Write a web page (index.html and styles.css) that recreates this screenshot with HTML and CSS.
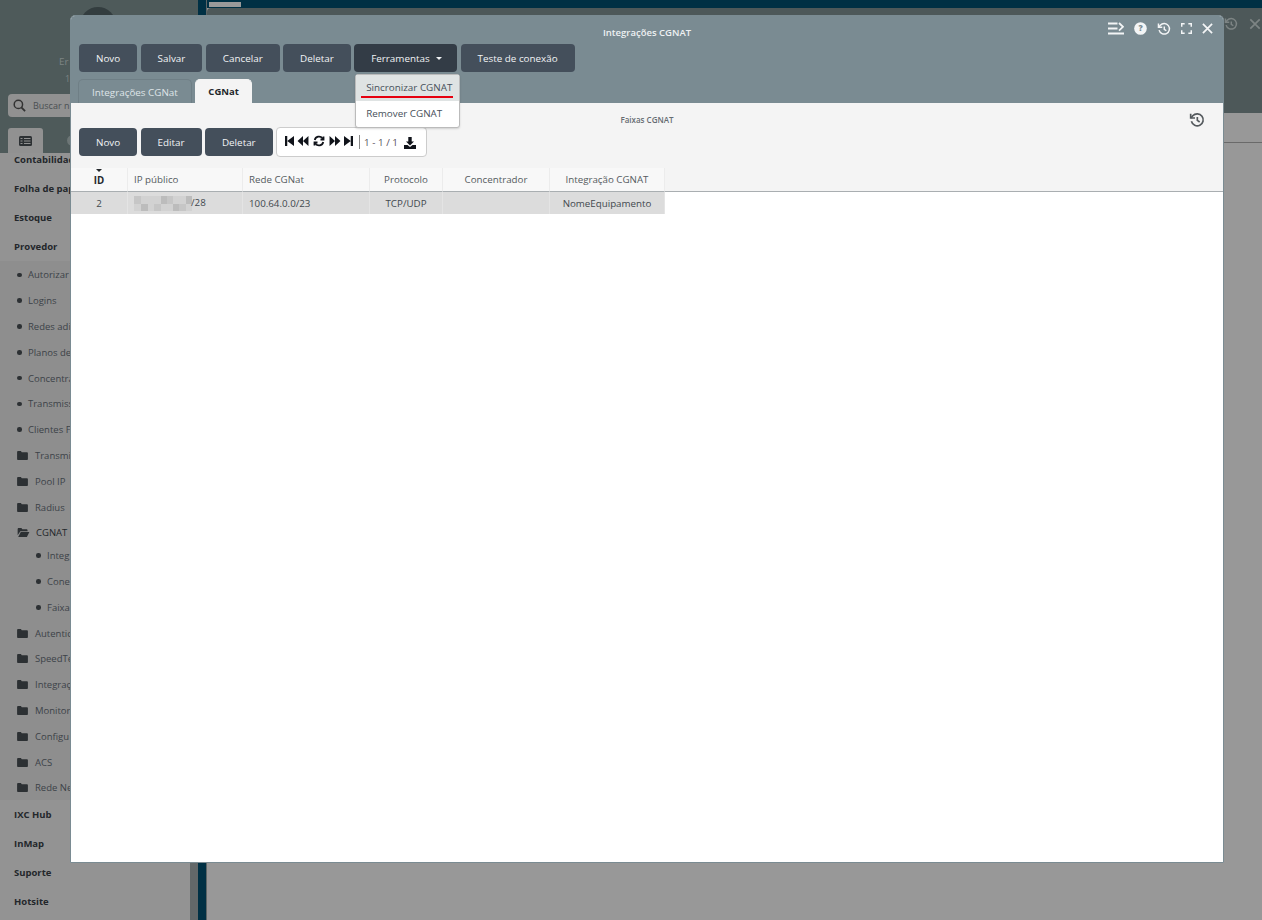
FILE: index.html
```html
<!DOCTYPE html>
<html>
<head>
  <meta charset="utf-8">
  <title>Integrações CGNAT</title>
  <link rel="stylesheet" href="styles.css">
</head>
<body>

  <svg class="defs" width="0" height="0">
    <symbol id="folder" viewBox="0 0 12 10"><path d="M0 1.2C0 .5.5 0 1.2 0h3l1 1.4h5.6c.7 0 1.2.5 1.2 1.2v6.2c0 .7-.5 1.2-1.2 1.2H1.2C.5 10 0 9.500 0 8.800z"/></symbol>
    <symbol id="folder-open" viewBox="0 0 13 10"><path d="M0 1.200C0 .5.500 0 1.200 0h3l1 1.400h4.600c.7 0 1.200.5 1.200 1.200V3.500H3L0 8z"/><path d="M3.500 4.500H13l-2.700 5.500H.6z"/></symbol>
    <symbol id="history" viewBox="0 0 24 24"><g fill="none" stroke="currentColor" stroke-width="2.500"><path d="M2.500 2.500v6.500H9"/><path d="M3.600 14a9 9 0 1 0 2-8.300L3 9"/><path d="M12.500 7.500v5l3.500 2.500"/></g></symbol>
    <symbol id="first" viewBox="0 0 10 11"><path d="M0 0h2.500v11H0zM10 0v11L2.500 5.500z"/></symbol>
    <symbol id="prev" viewBox="0 0 12 11"><path d="M6 0v11L0 5.500zM12 0v11L6 5.500z"/></symbol>
    <symbol id="next" viewBox="0 0 12 11"><path d="M0 0v11l6-5.500zM6 0v11l6-5.500z"/></symbol>
    <symbol id="last" viewBox="0 0 10 11"><path d="M10 0H7.500v11H10zM0 0v11l7.500-5.500z"/></symbol>
  </svg>

  <div class="app">
    <aside class="side">
      <div class="side-top">
        <div class="avatar"></div>
        <div class="user-name">Er</div>
        <div class="user-ip">1</div>
        <div class="search">
          <svg class="search-icon" viewBox="0 0 14 14"><circle cx="5.800" cy="5.800" r="4.500" fill="none" stroke="currentColor" stroke-width="1.600"/><path d="M9 9l4 4" stroke="currentColor" stroke-width="2"/></svg>
          <span>Buscar n</span>
        </div>
        <div class="side-tabs">
          <div class="side-tab">
            <svg class="list-icon" viewBox="0 0 13 10"><rect width="13" height="10" rx="1.500"/><path d="M1.500 2.500h2M1.500 5h2M1.500 7.500h2M5 2.500h6.500M5 5h6.500M5 7.500h6.500" stroke="#919191" stroke-width="1"/></svg>
          </div>
          <div class="side-tab-dim"></div>
        </div>
      </div>
      <div class="side-body">
        <nav class="menu">
          <div class="sec">Contabilidad</div>
          <div class="sec">Folha de pap</div>
          <div class="sec">Estoque</div>
          <div class="sec">Provedor</div>
          <div class="sub">
            <div class="row"><i class="dot"></i>Autorizar</div>
            <div class="row"><i class="dot"></i>Logins</div>
            <div class="row"><i class="dot"></i>Redes adi</div>
            <div class="row"><i class="dot"></i>Planos de</div>
            <div class="row"><i class="dot"></i>Concentra</div>
            <div class="row"><i class="dot"></i>Transmiss</div>
            <div class="row"><i class="dot"></i>Clientes F</div>
            <div class="row"><svg class="fold"><use href="#folder"/></svg>Transmi</div>
            <div class="row"><svg class="fold"><use href="#folder"/></svg>Pool IP</div>
            <div class="row"><svg class="fold"><use href="#folder"/></svg>Radius</div>
            <div class="row open"><svg class="fold"><use href="#folder-open"/></svg>CGNAT</div>
            <div class="row leaf first-leaf"><i class="dot"></i>Integ</div>
            <div class="row leaf"><i class="dot"></i>Cone</div>
            <div class="row leaf"><i class="dot"></i>Faixa</div>
            <div class="row"><svg class="fold"><use href="#folder"/></svg>Autentic</div>
            <div class="row"><svg class="fold"><use href="#folder"/></svg>SpeedTe</div>
            <div class="row"><svg class="fold"><use href="#folder"/></svg>Integraç</div>
            <div class="row"><svg class="fold"><use href="#folder"/></svg>Monitor</div>
            <div class="row"><svg class="fold"><use href="#folder"/></svg>Configu</div>
            <div class="row"><svg class="fold"><use href="#folder"/></svg>ACS</div>
            <div class="row"><svg class="fold"><use href="#folder"/></svg>Rede Ne</div>
          </div>
          <div class="sec">IXC Hub</div>
          <div class="sec">InMap</div>
          <div class="sec">Suporte</div>
          <div class="sec">Hotsite</div>
        </nav>
        <div class="scroll"></div>
      </div>
    </aside>
    <div class="rail"></div>
    <main class="main">
      <div class="main-top"><div class="main-tab"></div></div>
      <div class="panel-head">
        <svg class="bg-icon"><use href="#history"/></svg>
        <svg class="bg-icon bg-x" viewBox="0 0 14 14"><path d="M1.500 1.500l11 11M12.500 1.500l-11 11" stroke="currentColor" stroke-width="2"/></svg>
      </div>
      <div class="panel-line"></div>
    </main>
  </div>

  <div class="modal">
    <div class="modal-head">
      <div class="title-row">
        <span></span>
        <div class="modal-title">Integrações CGNAT</div>
        <div class="win-icons">
          <svg class="w-list" viewBox="0 0 16 13"><path d="M0 1.500h9.500M0 6.500h9.500M0 11.500h16" stroke="currentColor" stroke-width="2"/><path d="M11 1l4 3.800-4 3.800" fill="none" stroke="currentColor" stroke-width="1.800"/></svg>
          <svg class="w-help" viewBox="0 0 14 14"><circle cx="7" cy="7" r="6.800" fill="currentColor"/><text x="7" y="10.200" class="help-mark">?</text></svg>
          <svg class="w-hist"><use href="#history"/></svg>
          <svg class="w-full" viewBox="0 0 12 12"><path d="M.8 4V.8H4M8 .8h3.200V4M11.200 8v3.200H8M4 11.200H.8V8" fill="none" stroke="currentColor" stroke-width="1.600"/></svg>
          <svg class="w-close" viewBox="0 0 12 12"><path d="M1 1l10 10M11 1L1 11" stroke="currentColor" stroke-width="1.900"/></svg>
        </div>
      </div>
      <div class="toolbar">
        <button class="btn">Novo</button>
        <button class="btn">Salvar</button>
        <button class="btn">Cancelar</button>
        <button class="btn">Deletar</button>
        <div class="drop-wrap">
          <button class="btn btn-active">Ferramentas <i class="caret"></i></button>
          <div class="drop">
            <div class="drop-item hover">Sincronizar CGNAT<i class="red-mark"></i></div>
            <div class="drop-item">Remover CGNAT</div>
          </div>
        </div>
        <button class="btn">Teste de conexão</button>
      </div>
      <div class="tabs">
        <div class="tab">Integrações CGNat</div>
        <div class="tab tab-on">CGNat</div>
      </div>
    </div>

    <div class="modal-body">
      <div class="sub-title">
        <span></span>
        <div class="sub-name">Faixas CGNAT</div>
        <svg class="sub-hist"><use href="#history"/></svg>
      </div>
      <div class="toolbar toolbar-sub">
        <button class="btn">Novo</button>
        <button class="btn">Editar</button>
        <button class="btn">Deletar</button>
        <div class="pager">
          <svg class="pg pg-first"><use href="#first"/></svg>
          <svg class="pg pg-prev"><use href="#prev"/></svg>
          <svg class="pg pg-sync" viewBox="0 0 24 24"><g fill="none" stroke="currentColor" stroke-width="3.600"><path d="M21 3v6h-6"/><path d="M3.500 10A8.800 8.800 0 0 1 19 6.500L21 9"/><path d="M3 21v-6h6"/><path d="M20.500 14A8.800 8.800 0 0 1 5 17.500L3 15"/></g></svg>
          <svg class="pg pg-next"><use href="#next"/></svg>
          <svg class="pg pg-last"><use href="#last"/></svg>
          <span class="pg-sep"></span>
          <span class="pg-text">1 - 1 / 1</span>
          <svg class="pg pg-down" viewBox="0 0 12 12"><path d="M4.300 0h3.400v4.500H10L6 8.500 2 4.500h2.300z"/><path d="M0 8h3.500L6 10l2.500-2H12v4H0z"/></svg>
        </div>
      </div>

      <table class="grid">
        <thead>
          <tr>
            <th class="c-id"><i class="sort"></i><b>ID</b></th>
            <th class="c-ip left">IP público</th>
            <th class="c-net left">Rede CGNat</th>
            <th class="c-pro">Protocolo</th>
            <th class="c-con">Concentrador</th>
            <th class="c-int">Integração CGNAT</th>
            <th class="c-fill"></th>
          </tr>
        </thead>
        <tbody>
          <tr>
            <td>2</td>
            <td class="left"><svg class="blur" viewBox="0 0 58 15"><rect width="58" height="15" fill="#d2d2d2"/><path d="M0 0h7v8H0zM20 8h7v7h-7zM33 0h6v8h-6zM45 8h7v7h-7z" fill="#c6c6c6"/><path d="M7 8h7v7H7zM27 0h6v8h-6zM39 8h6v7h-6zM52 0h6v8h-6z" fill="#bcbcbc"/></svg><span class="mask">/28</span></td>
            <td class="left">100.64.0.0/23</td>
            <td>TCP/UDP</td>
            <td></td>
            <td>NomeEquipamento</td>
            <td class="c-fill"></td>
          </tr>
        </tbody>
      </table>
    </div>
  </div>

</body>
</html>
```

FILE: styles.css
```css
* {
  box-sizing: border-box;
}

html, body {
  margin: 0;
  height: 100%;
  overflow: hidden;
}

body {
  font-family: "Open Sans", sans-serif;
  font-size: 9.85px;
  color: #444;
  background: #989898;
}

.defs {
  position: absolute;
}

.app {
  display: flex;
  height: 920px;
}

/* background page, dimmed behind the modal */
.side {
  width: 198px;
  display: flex;
  flex-direction: column;
}

.side-top {
  height: 153px;
  background: #4e5a5a;
  padding-top: 7px;
  display: flex;
  flex-direction: column;
}

.avatar {
  width: 36px;
  height: 36px;
  border-radius: 50%;
  background: #333d3f;
  margin: 0 0 0 80px;
}

.user-name {
  margin-top: 11px;
  padding-left: 59px;
  white-space: nowrap;
  color: #7d8484;
  line-height: 14px;
  height: 14px;
}

.user-ip {
  margin-top: 4px;
  padding-left: 65px;
  white-space: nowrap;
  color: #7d8484;
  font-size: 9px;
  line-height: 14px;
  height: 14px;
}

.search {
  margin: 8px 0 0 8px;
  width: 150px;
  height: 23px;
  background: #919191;
  border-radius: 4px;
  display: flex;
  align-items: center;
  padding-left: 5px;
  gap: 7px;
  font-size: 9px;
  color: #4a4f52;
  white-space: nowrap;
}

.search-icon {
  width: 13px;
  height: 13px;
  flex: none;
  color: #333;
}

.side-tabs {
  display: flex;
  margin: 11px 0 0 8px;
  height: 25px;
}

.side-tab {
  width: 35px;
  background: #919191;
  border-radius: 3px 3px 0 0;
  display: flex;
  align-items: center;
  justify-content: center;
}

.side-tab-dim {
  width: 12px;
  height: 11px;
  margin: 7px 0 0 24px;
  border-radius: 50%;
  background: #6d7676;
}

.list-icon {
  width: 13px;
  height: 10px;
  fill: #2c3033;
}

.side-body {
  flex: 1;
  display: flex;
  background: #939393;
}

.menu {
  width: 190px;
  margin-top: -8px;
  position: relative;
}

.sec {
  height: 29px;
  padding-left: 14px;
  display: flex;
  align-items: center;
  font-weight: 700;
  font-size: 9.5px;
  color: #23272b;
  white-space: nowrap;
}

.sub {
  background: #8e8e8e;
  padding-top: 1px;
  height: 539px;
}

.row {
  height: 25.8px;
  padding-left: 17px;
  display: flex;
  align-items: center;
  font-size: 9.5px;
  color: #3c4248;
  white-space: nowrap;
}

.dot {
  width: 4.5px;
  height: 4.5px;
  flex: none;
  border-radius: 50%;
  background: #2c3033;
  margin-right: 6.5px;
}

.fold {
  width: 11px;
  height: 9px;
  flex: none;
  fill: #2c3033;
  margin-right: 7px;
}

.open {
  color: #23272b;
}

.open .fold {
  width: 13px;
  margin-right: 6px;
}

.leaf {
  padding-left: 36px;
}

.first-leaf {
  margin-top: -3px;
}

.scroll {
  width: 8px;
  background: #636869;
}

.rail {
  width: 9px;
  background: #003044;
  border-right: 1px solid #5d6566;
}

.main {
  flex: 1;
  display: flex;
  flex-direction: column;
}

.main-top {
  height: 8px;
  background: #003044;
  padding: 2px 0 0 2px;
}

.main-tab {
  width: 32px;
  height: 5px;
  background: #9a9a9a;
}

.panel-head {
  height: 105px;
  background: #4d5859;
  border-radius: 4px 0 0 0;
  display: flex;
  justify-content: flex-end;
  align-items: flex-start;
  gap: 11px;
  padding: 9px 1px 0 0;
  color: #7d8484;
}

.bg-icon {
  width: 14px;
  height: 14px;
}

.bg-x {
  width: 12px;
  height: 12px;
  margin-top: 1px;
}

.panel-line {
  height: 30px;
  border-bottom: 1px solid #6a6a6a;
}

/* modal */
.modal {
  position: absolute;
  left: 70px;
  top: 15px;
  width: 1154px;
  height: 848px;
  border: 1px solid #7a8b92;
  border-radius: 5px 5px 0 0;
  background: #fff;
  display: flex;
  flex-direction: column;
}

.modal-head {
  background: #7a8b92;
  height: 87px;
  border-radius: 4px 4px 0 0;
}

.title-row {
  height: 28px;
  display: grid;
  grid-template-columns: 1fr auto 1fr;
  align-items: center;
}

.modal-title {
  font-size: 9.5px;
  font-weight: 600;
  color: #eef1f2;
  padding-top: 4px;
}

.win-icons {
  justify-self: end;
  display: flex;
  align-items: center;
  gap: 10px;
  padding: 0 10px 0 0;
  color: #f3f5f6;
  margin-top: -3px;
}

.w-list {
  width: 16px;
  height: 13px;
}

.w-help {
  width: 13px;
  height: 13px;
}

.help-mark {
  font-size: 9px;
  font-weight: 800;
  text-anchor: middle;
  fill: #7a8b92;
}

.w-hist {
  width: 14px;
  height: 14px;
}

.w-full {
  width: 11px;
  height: 11px;
}

.w-close {
  width: 11px;
  height: 11px;
}

.toolbar {
  display: flex;
  gap: 3.4px;
  padding-left: 8px;
  height: 28px;
}

.btn {
  height: 28px;
  padding: 0 17px;
  border: 0;
  border-radius: 4px;
  background: #444f5b;
  color: #f1f3f5;
  font-family: "Open Sans", sans-serif;
  font-size: 9.85px;
  white-space: nowrap;
}

.btn-active {
  background: #333c46;
  padding-right: 15px;
}

.caret {
  display: inline-block;
  width: 0;
  height: 0;
  border: 3.5px solid transparent;
  border-top-color: #f1f3f5;
  border-bottom: 0;
  margin: 0 0 2px 4px;
  vertical-align: middle;
}

.drop-wrap {
  position: relative;
}

.drop {
  position: absolute;
  left: 1px;
  top: 30px;
  width: 105px;
  background: #fff;
  border: 1px solid #bbb;
  border-radius: 3px;
  z-index: 2;
  box-shadow: 0 1px 2px rgba(0, 0, 0, .15);
}

.drop-item {
  position: relative;
  height: 26px;
  padding: 0 0 2px 10px;
  display: flex;
  align-items: center;
  color: #47505a;
  white-space: nowrap;
}

.hover {
  background: #dfe3e3;
}

.red-mark {
  position: absolute;
  left: 5px;
  top: 21px;
  width: 92px;
  height: 2px;
  background: #e6000f;
}

.tabs {
  display: flex;
  gap: 3px;
  padding: 7px 0 0 7px;
}

.tab {
  height: 24px;
  padding: 0 13px;
  border: 1px solid #6f7f86;
  border-bottom: 0;
  border-radius: 5px 5px 0 0;
  display: flex;
  align-items: center;
  color: #dfe5e8;
  background: #7a8b92;
}

.tab-on {
  padding: 0 12.5px;
  background: #f4f4f4;
  border-color: #f4f4f4;
  color: #23272b;
  font-size: 9.5px;
  font-weight: 700;
}

.modal-body {
  flex: 1;
  background: #fff;
  display: flex;
  flex-direction: column;
}

.sub-title {
  height: 25px;
  background: #f4f4f4;
  display: grid;
  grid-template-columns: 1fr auto 1fr;
  padding-top: 9px;
}

.sub-name {
  font-size: 8px;
  font-weight: 600;
  color: #666c72;
  line-height: 16px;
}

.sub-hist {
  justify-self: end;
  width: 16px;
  height: 16px;
  margin: 0 18px 0 0;
  color: #54595d;
}

.toolbar-sub {
  background: #f4f4f4;
  height: 40px;
}

.pager {
  height: 30px;
  width: 151px;
  margin-top: -1px;
  background: #fff;
  border: 1px solid #ccc;
  border-radius: 4px;
  display: flex;
  align-items: center;
  padding-left: 8px;
}

.pg {
  height: 10px;
  width: 10px;
  color: #10131a;
  fill: #10131a;
  margin-top: -3px;
}

.pg-first { width: 9px; }
.pg-prev { width: 12px; margin-left: 3px; }
.pg-sync { width: 12px; height: 12px; margin-left: 4px; }
.pg-next { width: 12px; margin-left: 4px; }
.pg-last { width: 9px; margin-left: 3px; }

.pg-sep {
  width: 1px;
  height: 14px;
  background: #888;
  margin-left: 6px;
}

.pg-text {
  margin-left: 4px;
  width: 40px;
  color: #59505a;
}

.pg-down {
  width: 12px;
  height: 12px;
  margin-top: 1px;
}

.grid {
  border-collapse: separate;
  border-spacing: 0;
  table-layout: fixed;
  width: 100%;
  color: #42484e;
  font-size: 9.75px;
}

.grid th {
  height: 24px;
  font-weight: 400;
  color: #555b60;
  padding: 0;
  background: #f8f8f8;
  border-right: 1px solid #ececec;
  border-bottom: 1px solid #a9aeb1;
  text-align: center;
  position: relative;
}

.grid th b {
  display: block;
  font-weight: 700;
  color: #23272b;
  line-height: 11px;
  margin-top: 1px;
}

.grid th.c-fill {
  background: #f4f4f4;
  border-right: 0;
}

.sort {
  position: absolute;
  left: 25px;
  top: 1px;
  border: 3px solid transparent;
  border-top-color: #23272b;
  border-bottom: 0;
}

.grid td {
  height: 22px;
  padding: 0;
  text-align: center;
  background: #dcdcdc;
  border-right: 1px solid #e4e4e4;
  white-space: nowrap;
}

.grid td.c-fill {
  background: #fff;
  border-right: 0;
}

.grid .left {
  text-align: left;
  padding-left: 6px;
}

.c-id { width: 57px; }
.c-ip { width: 115px; }
.c-net { width: 127px; }
.c-pro { width: 73px; }
.c-con { width: 107px; }
.c-int { width: 115px; }

.blur {
  width: 58px;
  height: 15px;
  vertical-align: middle;
}

.mask {
  margin-left: -1px;
}
```
